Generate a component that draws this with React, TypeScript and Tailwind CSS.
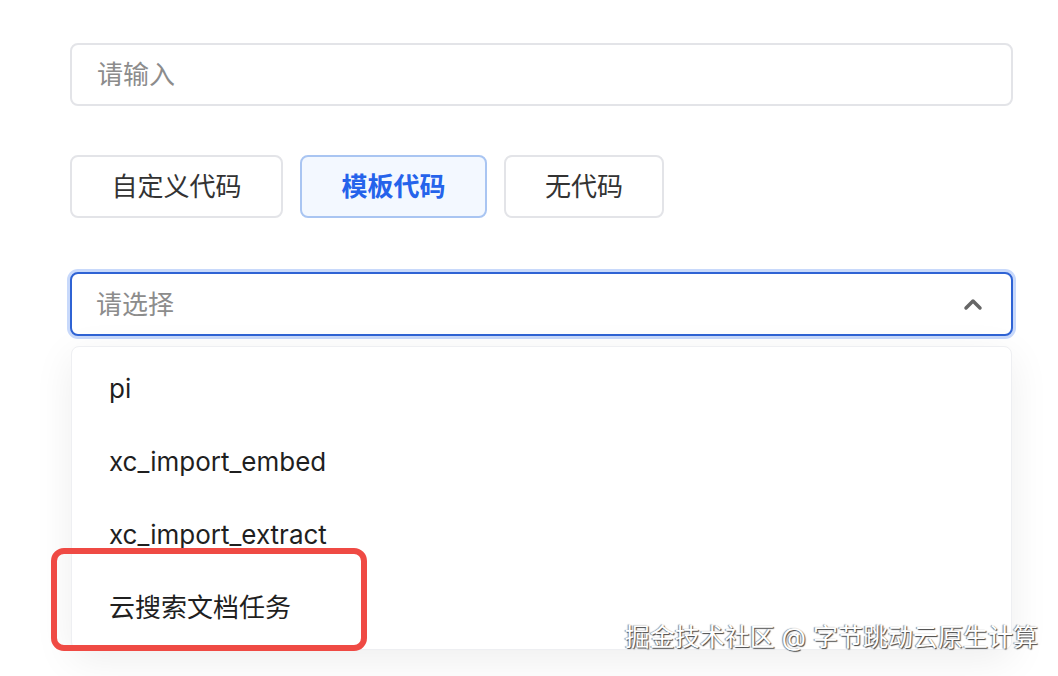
import { useState } from "react";

const modes = [
  { label: "自定义代码", w: "w-[213px]" },
  { label: "模板代码", w: "w-[187px]" },
  { label: "无代码", w: "w-[160px]" },
];
const options = ["pi", "xc_import_embed", "xc_import_extract", "云搜索文档任务"];

const font = {
  fontFamily: '"Inter", "Noto Sans CJK SC", sans-serif',
};

export default function App() {
  const [mode, setMode] = useState("模板代码");

  return (
    <div className="relative w-[1058px] h-[676px] overflow-hidden bg-white" style={font}>
      <div className="ml-[70px] w-[943px] pt-[43px]">
        {/* Name input */}
        <div className="h-[63px] rounded-[8px] border-2 border-[#e3e4e8] flex items-center px-[25px]">
          <span className="text-[26px] text-[#8c8c8c]">请输入</span>
        </div>

        {/* Mode buttons */}
        <div className="flex gap-[17px] mt-[49px]">
          {modes.map((m) => (
            <button
              key={m.label}
              onClick={() => setMode(m.label)}
              className={`${m.w} h-[63px] rounded-[8px] border-2 text-[26px] ${
                m.label === mode
                  ? "border-[#a9c5f2] bg-[#f3f8ff] text-[#2563eb] font-semibold"
                  : "border-[#e3e4e8] bg-white text-[#333]"
              }`}
            >
              {m.label}
            </button>
          ))}
        </div>

        {/* Select */}
        <div className="mt-[54px] h-[64px] rounded-[8px] border-2 border-[#2f63d4] ring-[3px] ring-[#c8d9fb] bg-white flex items-center justify-between pl-[24px] pr-[28px]">
          <span className="text-[26px] text-[#8c8c8c]">请选择</span>
          <svg width="20" height="14" viewBox="0 0 20 14" fill="none">
            <polyline
              points="3,11 10,4 17,11"
              stroke="#666"
              strokeWidth="3.5"
              strokeLinecap="round"
              strokeLinejoin="round"
            />
          </svg>
        </div>

        {/* Dropdown */}
        <div className="relative mt-[10px] mx-[1px] rounded-[8px] border border-[#eeeff2] bg-white py-[5px] shadow-[0_10px_40px_rgba(0,0,0,0.07)]">
          {options.map((o) => (
            <div key={o} className="h-[73px] flex items-center pl-[37px] text-[26px] text-[#1f1f1f]">
              {o}
            </div>
          ))}
          <div className="absolute left-[-21px] top-[201px] w-[316px] h-[103px] rounded-[13px] border-[6px] border-[#ef4a44]" />
        </div>
      </div>

      <div
        className="absolute right-[20px] bottom-[20px] text-[25px] text-white"
        style={{ textShadow: "1px 1px 1px #444, -1px 0 1px #888" }}
      >
        掘金技术社区 @ 字节跳动云原生计算
      </div>
    </div>
  );
}
